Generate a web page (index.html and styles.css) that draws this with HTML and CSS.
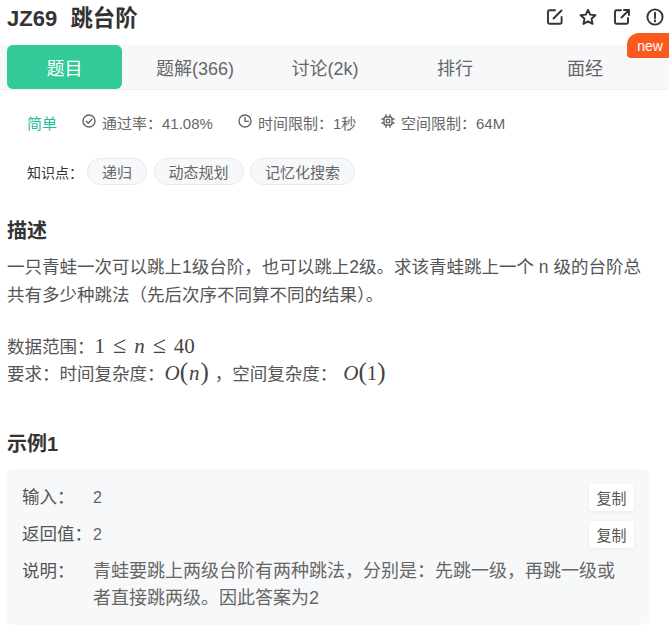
FILE: index.html
```html
<!DOCTYPE html>
<html lang="zh-CN">
<head>
<meta charset="utf-8">
<title>JZ69 跳台阶</title>
<link rel="stylesheet" href="styles.css">
</head>
<body>
<header class="head">
  <h1 class="title">JZ69&nbsp;&nbsp;<span class="title-cn">跳台阶</span></h1>
  <div class="actions">
    <svg class="act" viewBox="0 0 18 18"><path d="M9 2.2H3.5A1.5 1.5 0 0 0 2 3.7v10.6a1.5 1.5 0 0 0 1.5 1.5h10.6a1.5 1.5 0 0 0 1.5-1.5V9M7.5 10.5 15.5 2.5"/></svg>
    <svg class="act" viewBox="0 0 18 18"><path d="M9 1.8 11.2 6.6 16.4 7.2 12.5 10.7 13.6 15.9 9 13.3 4.4 15.9 5.5 10.7 1.6 7.2 6.8 6.6Z"/></svg>
    <svg class="act" viewBox="0 0 18 18"><path d="M8 2.2H3.5A1.5 1.5 0 0 0 2 3.7v10.6a1.5 1.5 0 0 0 1.5 1.5h10A1.5 1.5 0 0 0 15 14.3V10M8.5 9.5 16 2M11 2h5v5"/></svg>
    <svg class="act" viewBox="0 0 18 18"><circle cx="9" cy="9" r="7.6"/><path d="M9 4.8v5.2M9 12.2v1.2"/></svg>
  </div>
</header>
<nav class="tabs">
  <a class="tab tab-on">题目</a>
  <a class="tab">题解(366)</a>
  <a class="tab">讨论(2k)</a>
  <a class="tab">排行</a>
  <a class="tab">面经</a>
  <span class="new">new</span>
</nav>
<div class="meta">
  <span class="level">简单</span>
  <span class="stat stat-a"><svg class="ico" viewBox="0 0 14 14"><circle cx="7" cy="7" r="6"/><path d="M4.2 7.2 6.2 9.2 9.9 5.2"/></svg>通过率：41.08%</span>
  <span class="stat stat-b"><svg class="ico" viewBox="0 0 14 14"><circle cx="7" cy="7" r="6"/><path d="M7 3.5V7.4H10.4"/></svg>时间限制：1秒</span>
  <span class="stat stat-c"><svg class="ico" viewBox="0 0 14 14"><rect x="3" y="3" width="8" height="8" rx="1.5"/><rect x="5.4" y="5.4" width="3.2" height="3.2"/><path d="M5 .8V3M9 .8V3M5 11v2.2M9 11v2.2M.8 5H3M.8 9H3M11 5h2.2M11 9h2.2"/></svg>空间限制：64M</span>
</div>
<div class="topics">
  <span class="topics-label">知识点：</span>
  <a class="chip">递归</a>
  <a class="chip">动态规划</a>
  <a class="chip">记忆化搜索</a>
</div>
<section class="desc">
  <h2 class="sub">描述</h2>
  <p class="para">一只青蛙一次可以跳上1级台阶，也可以跳上2级。求该青蛙跳上一个 n 级的台阶总共有多少种跳法（先后次序不同算不同的结果）。</p>
  <p class="range">数据范围：<span class="math">1<span class="rel">≤</span><i>n</i><span class="rel">≤</span>40</span></p>
  <p class="req">要求：时间复杂度：<span class="math"><i>O</i><span class="paren">(</span><i class="var-n">n</i><span class="paren">)</span></span><span class="sep">，</span>空间复杂度：<span class="math math-gap"><i>O</i><span class="paren">(</span>1<span class="paren">)</span></span></p>
</section>
<section class="example">
  <h2 class="sub">示例1</h2>
  <div class="box">
    <div class="row row-a"><span class="lab">输入：</span><span class="val">2</span><button class="copy">复制</button></div>
    <div class="row row-b"><span class="lab">返回值：</span><span class="val">2</span><button class="copy">复制</button></div>
    <div class="row row-c"><span class="lab">说明：</span><span class="val val-text">青蛙要跳上两级台阶有两种跳法，分别是：先跳一级，再跳一级或者直接跳两级。因此答案为2</span></div>
  </div>
</section>
</body>
</html>
```
FILE: styles.css
```css
* { box-sizing: border-box; }
html, body { margin: 0; padding: 0; }
body {
  width: 669px;
  height: 628px;
  overflow: hidden;
  background: #fff;
  color: #555;
  font-family: "Liberation Sans", "Noto Sans CJK SC", sans-serif;
  font-size: 17.5px;
}
.head {
  height: 45px;
  padding: 0 5px 7px 7px;
  display: flex;
  align-items: center;
  justify-content: space-between;
}
.title { margin: 0; font-size: 22px; line-height: 30px; font-weight: 700; color: #333; }
.title-cn { font-size: 22.4px; margin-left: 1px; }
.actions { display: flex; gap: 15.4px; margin-top: -4px; }
.act { width: 18px; height: 18px; fill: none; stroke: #333; stroke-width: 1.9; stroke-linecap: round; stroke-linejoin: round; }
.tabs {
  position: relative;
  height: 45px;
  display: grid;
  grid-template-columns: repeat(5, 130px);
  background: #f7f8fa;
  border-bottom: 1px solid #eef0f3;
}
.tab { display: flex; align-items: center; justify-content: center; height: 44px; font-size: 18px; color: #666; }
.tab-on { width: 115px; margin-left: 7px; background: #32ca99; color: #fff; border-radius: 6px; }
.new {
  position: absolute;
  right: 0;
  top: -12px;
  width: 42px;
  height: 25px;
  padding: 3px 0 0 4px;
  background: #fb5a1f;
  color: #fff;
  font-size: 14px;
  line-height: 20px;
  text-align: center;
  border-radius: 12px 0 0 4px;
}
.meta { height: 24px; margin-top: 20px; padding-left: 27px; display: flex; align-items: center; font-size: 15px; color: #666; }
.level { color: #25bb9b; width: 55px; }
.stat { display: flex; align-items: center; gap: 6px; }
.stat-a { width: 156px; }
.stat-b { width: 143px; }
.ico { width: 14px; height: 14px; fill: none; stroke: #666; stroke-width: 1.4; stroke-linecap: round; stroke-linejoin: round; margin-top: -3px; }
.topics { margin-top: 23px; padding-left: 27px; display: flex; align-items: center; height: 28px; font-size: 15px; }
.topics-label { color: #333; width: 60px; font-size: 14px; margin-top: 2px; }
.chip {
  height: 27px;
  padding: 0 14px;
  margin-right: 6.5px;
  display: flex;
  align-items: center;
  background: #f7f8fa;
  border: 1px solid #e8e9ed;
  border-radius: 14px;
  color: #666;
}
.desc { margin-top: 32px; padding: 0 7px; }
.sub { margin: 0; font-size: 20px; line-height: 28px; font-weight: 700; color: #333; }
.para { margin: 8px 0 0; line-height: 28px; width: 640px; }
.range { margin: 24px 0 0; height: 26px; line-height: 26px; }
.req { margin: 0; height: 27px; line-height: 28px; }
.math { font-family: "Liberation Serif", serif; font-size: 21px; color: #444; }
.rel { margin: 0 8px; font-size: 24px; line-height: 20px; }
.paren { font-size: 25px; line-height: 20px; font-weight: 400; }
.var-n { margin: 0 1px; }
.sep { margin: 0 0 0 6px; }
.math-gap { margin-left: 6px; }
.example { margin-top: 44px; padding: 0 7px; }
.box { margin-top: 11px; width: 642px; height: 156px; background: #f7f8fa; border-radius: 6px; padding: 15px; }
.row { display: flex; align-items: flex-start; }
.row-a { height: 37px; }
.row-b { height: 37px; }
.lab { width: 71px; flex: none; line-height: 27px; }
.val { flex: 1; line-height: 27px; color: #666; font-size: 16px; }
.val-text { width: 530px; flex: none; font-size: 18px; }
.copy {
  width: 45px;
  height: 27px;
  padding: 0;
  border: 0;
  border-radius: 3px;
  background: #fff;
  box-shadow: 0 1px 4px rgba(0,0,0,.06);
  color: #555;
  font: inherit;
  font-size: 15px;
}
```
